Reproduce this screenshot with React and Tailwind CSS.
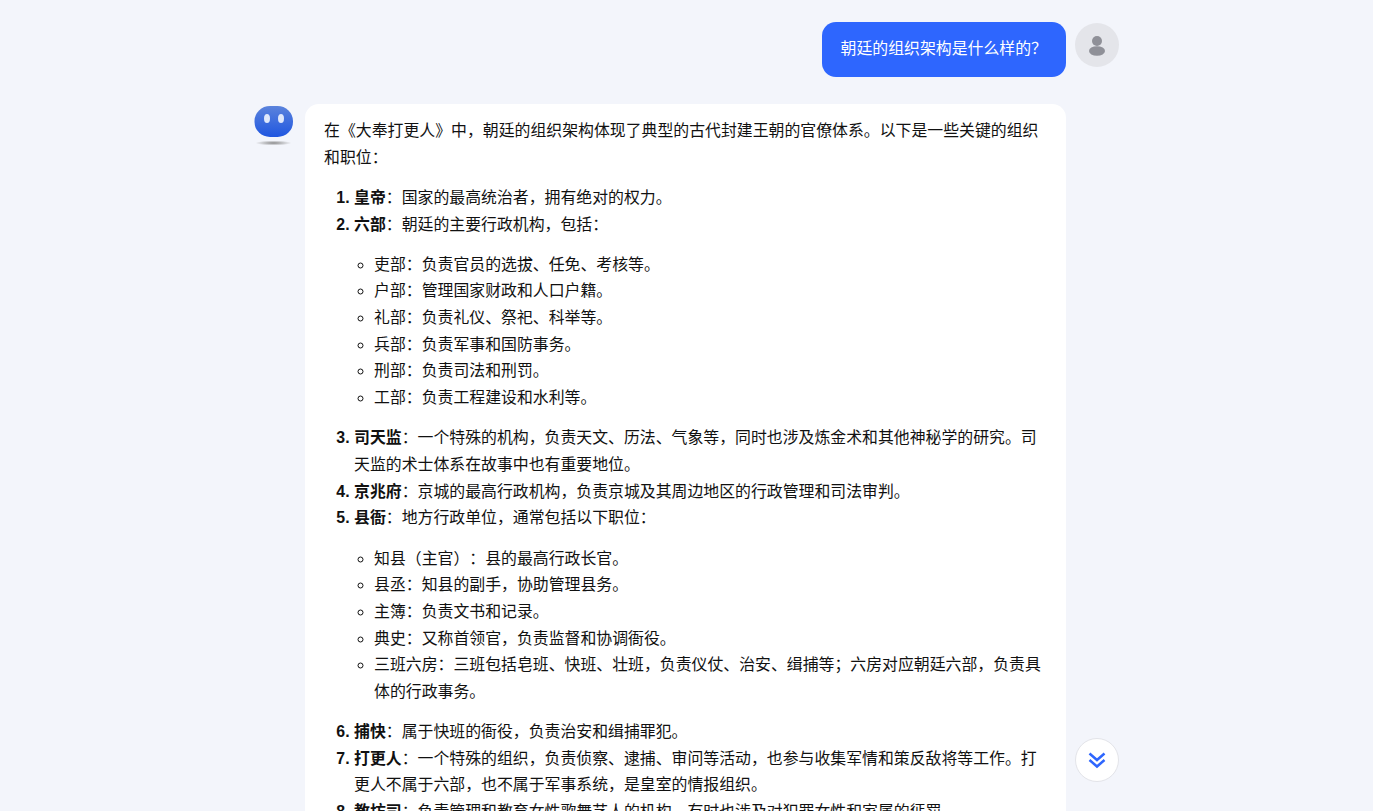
const departments = [
  "吏部：负责官员的选拔、任免、考核等。",
  "户部：管理国家财政和人口户籍。",
  "礼部：负责礼仪、祭祀、科举等。",
  "兵部：负责军事和国防事务。",
  "刑部：负责司法和刑罚。",
  "工部：负责工程建设和水利等。",
];

const countyPosts = [
  "知县（主官）：县的最高行政长官。",
  "县丞：知县的副手，协助管理县务。",
  "主簿：负责文书和记录。",
  "典史：又称首领官，负责监督和协调衙役。",
  "三班六房：三班包括皂班、快班、壮班，负责仪仗、治安、缉捕等；六房对应朝廷六部，负责具体的行政事务。",
];

function SubList({ items }) {
  return (
    <ul className="list-[circle] pl-[20px] my-[13.5px]">
      {items.map((item) => (
        <li key={item} className="marker:font-normal">{item}</li>
      ))}
    </ul>
  );
}

function BotAvatar() {
  return (
    <svg width="40" height="42" viewBox="0 0 40 42" className="shrink-0 mt-[2px]">
      <defs>
        <linearGradient id="face" x1="0" y1="0" x2="0" y2="1">
          <stop offset="0" stopColor="#5b83dc" />
          <stop offset="1" stopColor="#1f56e0" />
        </linearGradient>
        <radialGradient id="shadow">
          <stop offset="0" stopColor="#8a8a8a" />
          <stop offset="1" stopColor="#8a8a8a" stopOpacity="0" />
        </radialGradient>
      </defs>
      <rect x="0.5" y="0" width="38.5" height="31" rx="15.5" ry="15" fill="url(#face)" />
      <ellipse cx="13" cy="12.5" rx="3" ry="4.5" fill="#dfe8fb" />
      <ellipse cx="27" cy="12.5" rx="3" ry="4.5" fill="#dfe8fb" />
      <ellipse cx="19.5" cy="37" rx="18" ry="2.5" fill="url(#shadow)" />
    </svg>
  );
}

export default function App() {
  return (
    <div className="relative h-screen overflow-hidden bg-[#f3f5fb] text-[15.88px] leading-[26.67px] text-[#111] [text-spacing-trim:space-all] font-['Liberation_Sans','Noto_Sans_CJK_SC',sans-serif]">
      <div className="w-[865px] mx-auto">
        <div className="flex justify-end items-start gap-[9px] pt-[22px]">
          <div className="bg-[#2e66fe] text-white rounded-[14px] h-[55px] px-[19px] flex items-center">
            朝廷的组织架构是什么样的？
          </div>
          <div className="w-[44px] h-[44px] mt-px rounded-full bg-[#e4e5ea] flex items-center justify-center">
            <svg width="18" height="21" viewBox="0 0 18 21">
              <circle cx="9" cy="6" r="5" fill="#8f9098" />
              <ellipse cx="9" cy="16" rx="8" ry="4.8" fill="#8f9098" />
            </svg>
          </div>
        </div>

        <div className="flex items-start mt-[27px] w-[812px]">
          <BotAvatar />
          <div className="ml-[11px] w-[761px] bg-white rounded-[14px] px-[19px] pt-[14.3px] pb-4">
            <p className="mb-[13.3px]">
              在《大奉打更人》中，朝廷的组织架构体现了典型的古代封建王朝的官僚体系。以下是一些关键的组织和职位：
            </p>
            <ol className="list-decimal pl-[30px] marker:font-bold">
              <li><b>皇帝</b>：国家的最高统治者，拥有绝对的权力。</li>
              <li>
                <b>六部</b>：朝廷的主要行政机构，包括：
                <SubList items={departments} />
              </li>
              <li><b>司天监</b>：一个特殊的机构，负责天文、历法、气象等，同时也涉及炼金术和其他神秘学的研究。司天监的术士体系在故事中也有重要地位。</li>
              <li><b>京兆府</b>：京城的最高行政机构，负责京城及其周边地区的行政管理和司法审判。</li>
              <li>
                <b>县衙</b>：地方行政单位，通常包括以下职位：
                <SubList items={countyPosts} />
              </li>
              <li><b>捕快</b>：属于快班的衙役，负责治安和缉捕罪犯。</li>
              <li><b>打更人</b>：一个特殊的组织，负责侦察、逮捕、审问等活动，也参与收集军情和策反敌将等工作。打更人不属于六部，也不属于军事系统，是皇室的情报组织。</li>
              <li><b>教坊司</b>：负责管理和教育女性歌舞艺人的机构，有时也涉及对犯罪女性和家属的惩罚。</li>
            </ol>
          </div>
        </div>
      </div>

      <button className="absolute left-[1075px] top-[738px] w-[44px] h-[44px] rounded-full bg-white border border-[#e3e4e9] flex items-center justify-center">
        <svg width="18" height="17" viewBox="0 0 18 17" fill="none" stroke="#2e66fe" strokeWidth="2.5">
          <path d="M1.5 1.5 9 8l7.5-6.500" />
          <path d="M1.5 8 9 14.500 16.500 8" />
        </svg>
      </button>
    </div>
  );
}
